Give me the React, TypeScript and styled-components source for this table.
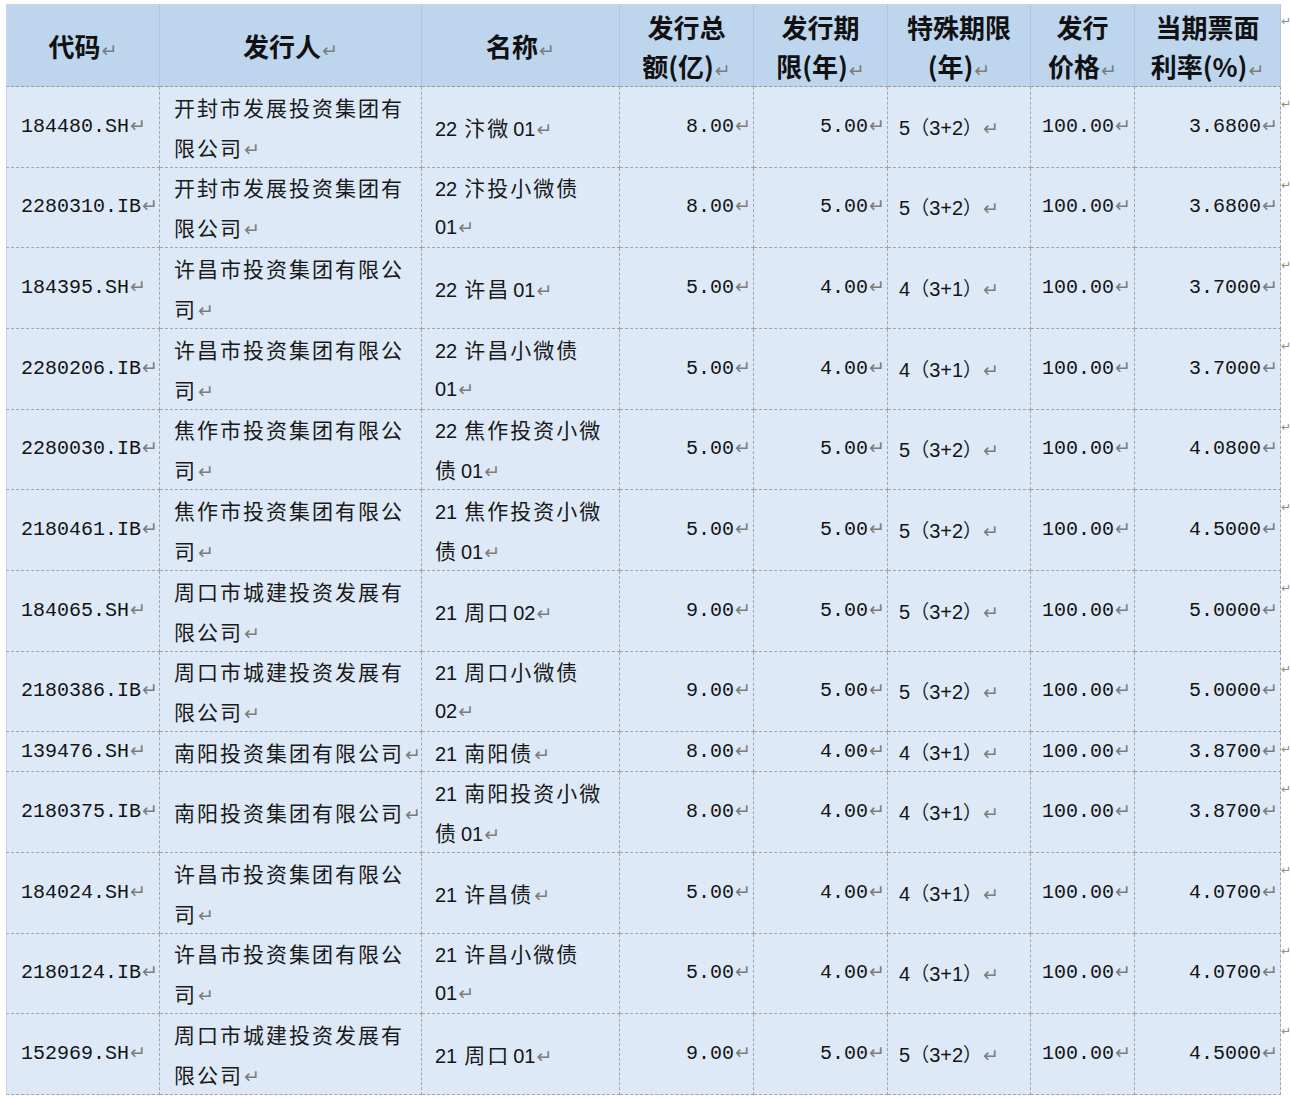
import { Fragment } from "react";
import styled, { createGlobalStyle } from "styled-components";

type Bond = {
  code: string;
  issuer: string[];
  name: string[];
  amount: string;
  term: string;
  special: string;
  price: string;
  rate: string;
};

const bonds: Bond[] = [
  { code: "184480.SH", issuer: ["开封市发展投资集团有", "限公司"], name: ["22汴微01"], amount: "8.00", term: "5.00", special: "5（3+2）", price: "100.00", rate: "3.6800" },
  { code: "2280310.IB", issuer: ["开封市发展投资集团有", "限公司"], name: ["22汴投小微债", "01"], amount: "8.00", term: "5.00", special: "5（3+2）", price: "100.00", rate: "3.6800" },
  { code: "184395.SH", issuer: ["许昌市投资集团有限公", "司"], name: ["22许昌01"], amount: "5.00", term: "4.00", special: "4（3+1）", price: "100.00", rate: "3.7000" },
  { code: "2280206.IB", issuer: ["许昌市投资集团有限公", "司"], name: ["22许昌小微债", "01"], amount: "5.00", term: "4.00", special: "4（3+1）", price: "100.00", rate: "3.7000" },
  { code: "2280030.IB", issuer: ["焦作市投资集团有限公", "司"], name: ["22焦作投资小微", "债01"], amount: "5.00", term: "5.00", special: "5（3+2）", price: "100.00", rate: "4.0800" },
  { code: "2180461.IB", issuer: ["焦作市投资集团有限公", "司"], name: ["21焦作投资小微", "债01"], amount: "5.00", term: "5.00", special: "5（3+2）", price: "100.00", rate: "4.5000" },
  { code: "184065.SH", issuer: ["周口市城建投资发展有", "限公司"], name: ["21周口02"], amount: "9.00", term: "5.00", special: "5（3+2）", price: "100.00", rate: "5.0000" },
  { code: "2180386.IB", issuer: ["周口市城建投资发展有", "限公司"], name: ["21周口小微债", "02"], amount: "9.00", term: "5.00", special: "5（3+2）", price: "100.00", rate: "5.0000" },
  { code: "139476.SH", issuer: ["南阳投资集团有限公司"], name: ["21南阳债"], amount: "8.00", term: "4.00", special: "4（3+1）", price: "100.00", rate: "3.8700" },
  { code: "2180375.IB", issuer: ["南阳投资集团有限公司"], name: ["21南阳投资小微", "债01"], amount: "8.00", term: "4.00", special: "4（3+1）", price: "100.00", rate: "3.8700" },
  { code: "184024.SH", issuer: ["许昌市投资集团有限公", "司"], name: ["21许昌债"], amount: "5.00", term: "4.00", special: "4（3+1）", price: "100.00", rate: "4.0700" },
  { code: "2180124.IB", issuer: ["许昌市投资集团有限公", "司"], name: ["21许昌小微债", "01"], amount: "5.00", term: "4.00", special: "4（3+1）", price: "100.00", rate: "4.0700" },
  { code: "152969.SH", issuer: ["周口市城建投资发展有", "限公司"], name: ["21周口01"], amount: "9.00", term: "5.00", special: "5（3+2）", price: "100.00", rate: "4.5000" },
];

const headers = [
  ["代码"],
  ["发行人"],
  ["名称"],
  ["发行总", "额(亿)"],
  ["发行期", "限(年)"],
  ["特殊期限", "(年)"],
  ["发行", "价格"],
  ["当期票面", "利率(%)"],
];

const COLS = "154px 262px 198px 134px 134px 143px 104px 146px 9px";
const HAN = /([\u3000-\u303f\u4e00-\u9fff\uff00-\uffef]+)/;

export default function App() {
  return (
    <>
      <GlobalStyle />
      <Page>
        <Row $h={83}>
          {headers.map((lines, i) => (
            <HeadCell key={i} $first={i === 0}>
              {lines.map((l, j) => (
                <div key={j}>
                  {l}
                  {j === lines.length - 1 && <Mark>↵</Mark>}
                </div>
              ))}
            </HeadCell>
          ))}
          <EndMark>↵</EndMark>
        </Row>
        {bonds.map((b) => {
          const two = b.issuer.length > 1 || b.name.length > 1;
          return (
            <Row key={b.code} $h={two ? 80.67 : 40}>
              <Cell $first $pad="0 2px 0 14px">
                <Lines lines={[b.code]} />
              </Cell>
              <Cell $pad="0 2px 0 14px">
                <Lines lines={b.issuer} />
              </Cell>
              <Cell $pad="0 2px 0 13px" $latin="sans">
                <Lines lines={b.name} spaced />
              </Cell>
              <Cell $align="right">
                <Lines lines={[b.amount]} />
              </Cell>
              <Cell $align="right">
                <Lines lines={[b.term]} />
              </Cell>
              <Cell $pad="0 2px 0 11px" $latin="sans">
                <Lines lines={[b.special]} small />
              </Cell>
              <Cell $align="right" $pad="0 3px 0 2px">
                <Lines lines={[b.price]} />
              </Cell>
              <Cell $align="right">
                <Lines lines={[b.rate]} />
              </Cell>
              <EndMark>↵</EndMark>
            </Row>
          );
        })}
      </Page>
    </>
  );
}

function Lines({ lines, spaced, small }: { lines: string[]; spaced?: boolean; small?: boolean }) {
  return (
    <>
      {lines.map((line, i) => {
        const parts = line.split(HAN);
        return (
          <Line key={i}>
            {parts.map((part, k) =>
              part === "" ? null : k % 2 ? (
                <Han
                  key={k}
                  $small={small}
                  $before={!!spaced && k > 0 && parts[k - 1] !== ""}
                  $after={!!spaced && k < parts.length - 1 && parts[k + 1] !== ""}
                >
                  {part}
                </Han>
              ) : (
                <Fragment key={k}>{part}</Fragment>
              )
            )}
            {i === lines.length - 1 && <Mark>↵</Mark>}
          </Line>
        );
      })}
    </>
  );
}

const GlobalStyle = createGlobalStyle`
  html, body {
    margin: 0;
    padding: 0;
    background: #ffffff;
  }
  body {
    width: 1290px;
    overflow: hidden;
  }
`;

const Page = styled.div`
  padding: 4px 0 0 6px;
  display: flex;
  flex-direction: column;
`;

const Row = styled.div<{ $h: number }>`
  display: grid;
  grid-template-columns: ${COLS};
  height: ${(p) => p.$h}px;
`;

const HeadCell = styled.div<{ $first?: boolean }>`
  box-sizing: border-box;
  display: flex;
  flex-direction: column;
  align-items: center;
  justify-content: center;
  text-align: center;
  background: #bdd6ee;
  border-top: 1px solid #c8d8ea;
  border-right: 1px dotted #9fb4cc;
  border-bottom: 1px dashed #9a9a9a;
  border-left: ${(p) => (p.$first ? "1px solid #c8d8ea" : "none")};
  font-family: "Noto Sans CJK SC", sans-serif;
  font-weight: 700;
  font-size: 26px;
  line-height: 39px;
  color: #111111;
  white-space: nowrap;
`;

const Cell = styled.div<{
  $first?: boolean;
  $align?: "left" | "right";
  $pad?: string;
  $latin?: "mono" | "sans";
}>`
  box-sizing: border-box;
  display: flex;
  flex-direction: column;
  justify-content: center;
  text-align: ${(p) => p.$align ?? "left"};
  padding: ${(p) => p.$pad ?? "0 2px"};
  background: #dde9f6;
  border-right: 1px dashed #a4a4a4;
  border-bottom: 1px dashed #a4a4a4;
  border-left: ${(p) => (p.$first ? "1px solid #c8d5e2" : "none")};
  font-family: ${(p) =>
    p.$latin === "sans"
      ? `"Liberation Sans", "Noto Sans CJK SC", sans-serif`
      : `"Liberation Mono", "Noto Sans CJK SC", monospace`};
  font-size: 20px;
  line-height: 40px;
  color: #141414;
  white-space: pre;
  overflow: hidden;
`;

const Line = styled.div`
  height: 40px;
`;

const Han = styled.span<{ $before?: boolean; $after?: boolean; $small?: boolean }>`
  font-family: "Noto Sans CJK SC", sans-serif;
  font-size: ${(p) => (p.$small ? "19px" : "21px")};
  letter-spacing: ${(p) => (p.$small ? "0" : "2px")};
  color: #1a1a1a;
  margin-left: ${(p) => (p.$before ? "7px" : "0")};
  margin-right: ${(p) => (p.$after ? "3px" : "0")};
`;

const Mark = styled.span`
  font-family: "DejaVu Sans", sans-serif;
  font-weight: 400;
  font-size: 19px;
  line-height: 1;
  color: #7c7c7c;
  margin-left: 1px;
  letter-spacing: 0;
`;

const EndMark = styled.div`
  font-family: "DejaVu Sans", sans-serif;
  font-size: 12px;
  color: #8c8c8c;
  padding: 10px 0 0 0;
  overflow: hidden;
  white-space: nowrap;
  background: #ffffff;
`;
